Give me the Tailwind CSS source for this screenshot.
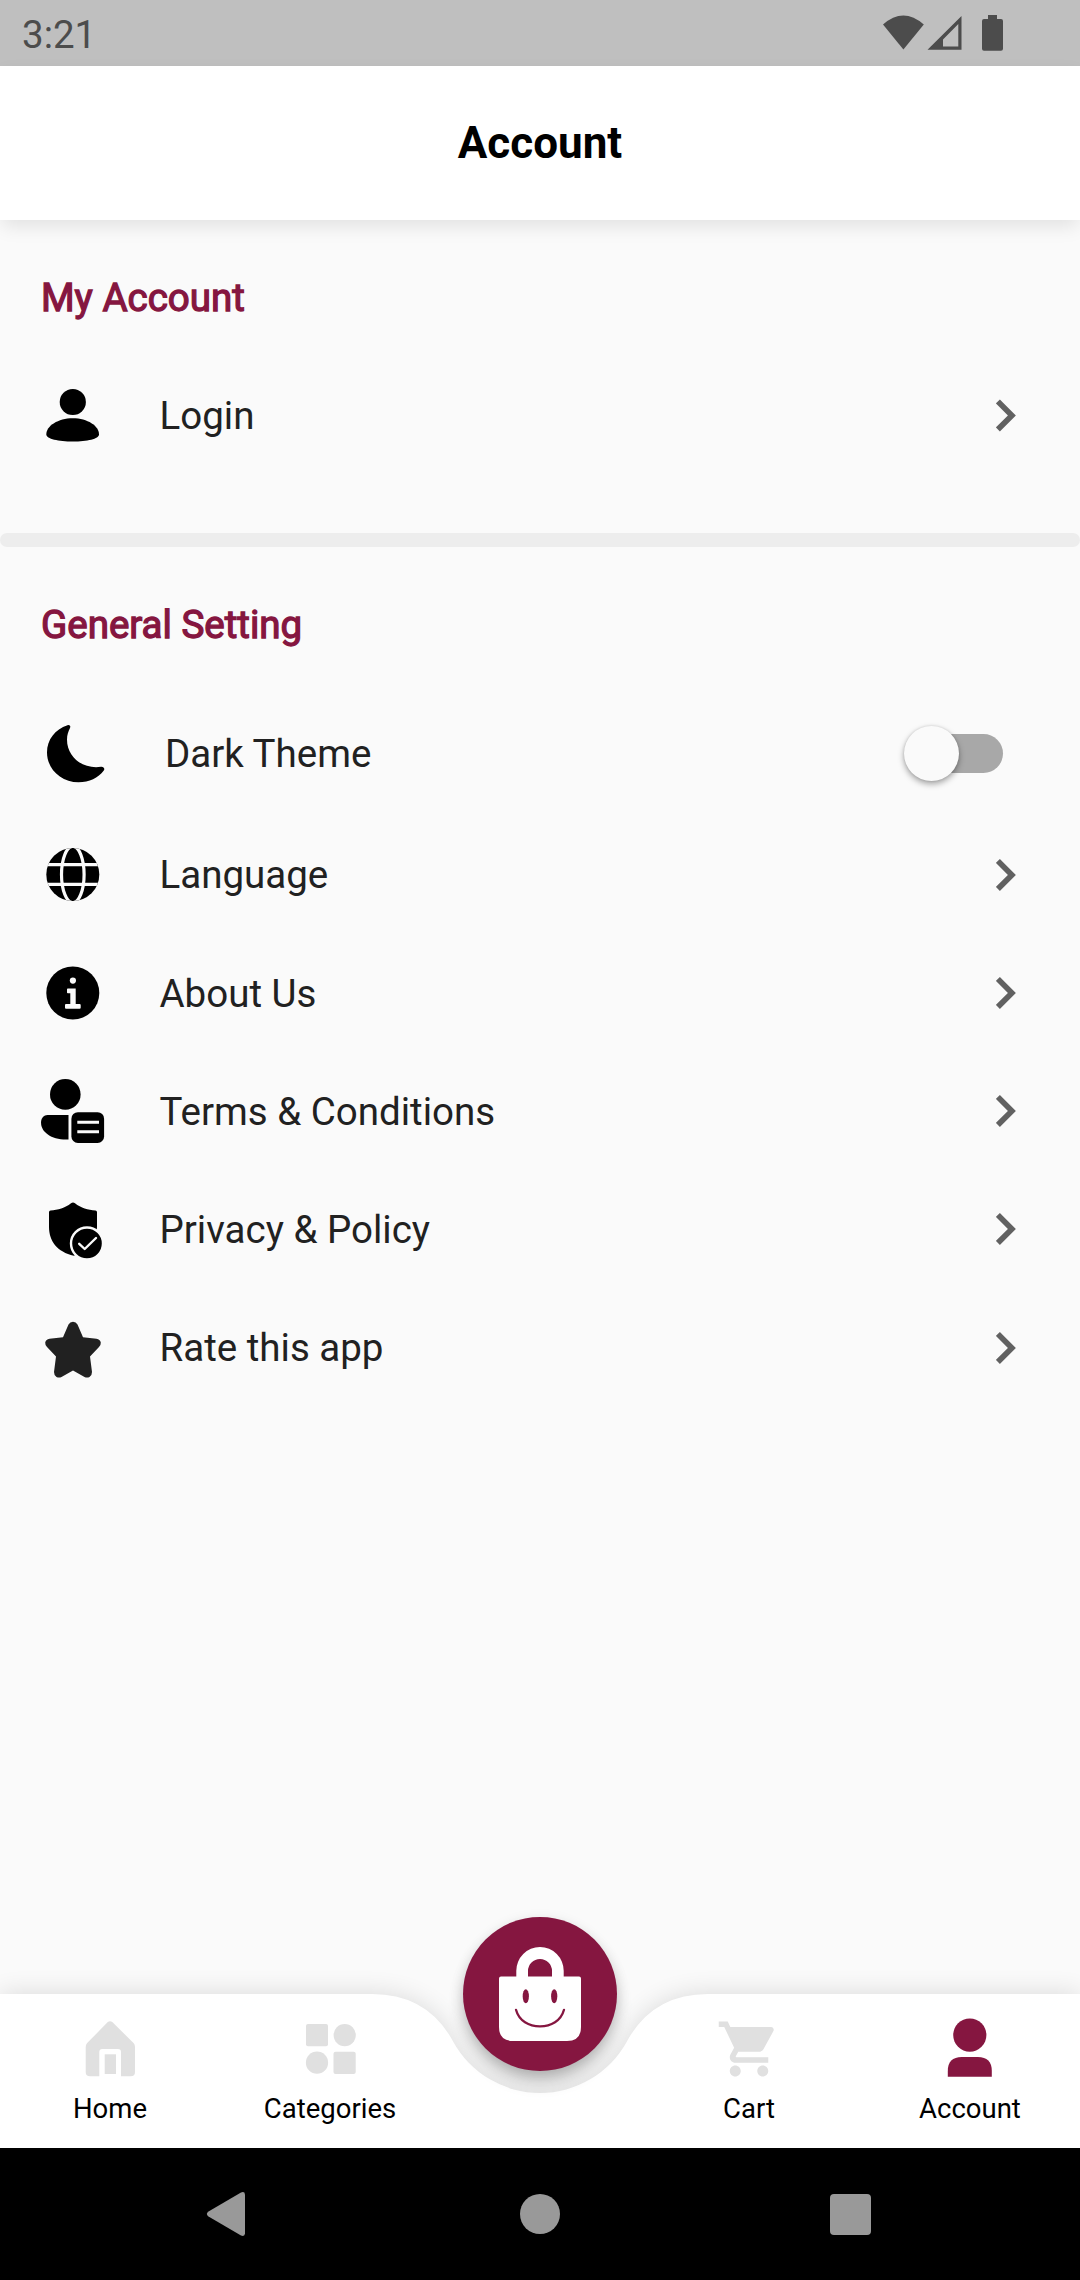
<!DOCTYPE html>
<html lang="en">
<head>
<meta charset="utf-8">
<title>Account</title>
<script src="https://cdn.jsdelivr.net/npm/@tailwindcss/browser@4"></script>
</head>
<body class="w-[1080px] h-[2280px] overflow-hidden flex flex-col bg-[#fafafa] font-['Roboto',sans-serif] text-[38.5px] leading-[46px] text-[#212121]">

<!-- Status bar -->
<div class="h-[66px] shrink-0 bg-[#bfbfbf] flex items-center justify-between pl-[22px] pr-[77px] text-[#4c4c4c]">
  <span class="text-[38.5px] pt-[3px]">3:21</span>
  <svg class="w-[120px] h-[36px]" viewBox="883 15 120 36" fill="currentColor">
    <path d="M883 24.5 Q903.3 6.5 923.8 24.5 L903.4 49.5Z"/>
    <path fill-rule="evenodd" d="M927.5 49.8 L961.5 16 V49.8Z M943 46.5 H958.3 V24 L943 39.5Z"/>
    <path d="M988 15 h9 v4 h4 q2 0 2 2 v27.7 q0 2-2 2 h-17 q-2 0-2-2 V21 q0-2 2-2 h4Z"/>
  </svg>
</div>

<!-- App bar -->
<header class="h-[154px] shrink-0 bg-white flex items-center justify-center relative shadow-[0_8px_18px_-2px_rgba(0,0,0,0.10)]">
  <h1 class="text-[44px] leading-[52px] font-bold text-black">Account</h1>
</header>

<main class="h-[1774px] shrink-0 flex flex-col">
  <h2 class="mt-[55px] pl-[41px] text-[#851640] [-webkit-text-stroke:1.3px_#851640]">My Account</h2>
  <div class="mt-[35px] h-[118px] pl-[41px] pr-[64px] flex items-center">
    <svg class="w-16 h-16 mr-[54.5px]" viewBox="0 0 64 64"><circle cx="31.8" cy="19" r="13.1"/><path d="M5.3 51.5C5.3 43 17 35.3 31.8 35.3S58 43 58 51.5C58 56 46 58.5 31.8 58.5S5.3 56 5.3 51.5Z"/></svg>
    <span class="flex-1 pt-[2px]">Login</span>
    <svg class="w-5 h-[33px]" viewBox="0 0 20 33" fill="none" stroke="#616161" stroke-width="5.6"><path d="M1.9 2.4 15.9 16.4 1.9 30.4"/></svg>
  </div>
  <div class="mt-[59px] h-[14px] shrink-0 rounded-full bg-[#ededed]"></div>
  <h2 class="mt-[55px] pl-[41px] text-[#851640] [-webkit-text-stroke:1.3px_#851640]">General Setting</h2>

  <div class="mt-[47px] h-[118px] pl-[41px] pr-[77px] flex items-center">
    <svg class="w-16 h-16 mr-[60px]" viewBox="0 0 64 64"><path d="M26.5 3.2C14 7.5 6 17.5 6 30.5 6 47 20 60.3 37.5 60.3 48.5 60.3 57 56 62.8 48.5 64.2 46.5 62.5 44.5 60 44.8 43 47.5 26 36 26 17.5 26 13 27.2 9.5 29 6 30 4 28.5 2.5 26.5 3.2Z"/></svg>
    <span class="flex-1">Dark Theme</span>
    <div class="mb-[2px] w-[91px] h-[39px] rounded-full bg-[#a8a8a8] flex items-center">
      <div class="w-[55px] h-[55px] shrink-0 -ml-2 rounded-full bg-[#fafafa] shadow-[0_3px_6px_rgba(0,0,0,0.35),0_0_3px_rgba(0,0,0,0.12)]"></div>
    </div>
  </div>

  <div class="pt-[2px] grid auto-rows-[118.25px]">
    <div class="pl-[41px] pr-[64px] flex items-center">
      <svg class="w-16 h-16 mr-[54.5px]" viewBox="0 0 64 64">
        <clipPath id="globe"><circle cx="31.8" cy="32.5" r="26.5"/></clipPath>
        <g clip-path="url(#globe)"><path d="M0 0H64V64H0Z"/><g fill="none" stroke="#fafafa" stroke-width="3.2"><ellipse cx="31.8" cy="32.5" rx="11.3" ry="28.2"/><path d="M0 22.7H64M0 42.3H64"/></g></g>
      </svg>
      <span class="flex-1 pt-[2px]">Language</span>
      <svg class="w-5 h-[33px]" viewBox="0 0 20 33" fill="none" stroke="#616161" stroke-width="5.6"><path d="M1.9 2.9 15.9 16.9 1.9 30.9"/></svg>
    </div>
    <div class="pl-[41px] pr-[64px] flex items-center">
      <svg class="w-16 h-16 mr-[54.5px]" viewBox="0 -1 64 64"><circle cx="31.8" cy="32" r="26.5"/><g fill="#fafafa"><circle cx="31.9" cy="19.6" r="3.1"/><path d="M26.8 27.6H34.7V43H38.6Q39.7 43 39.7 44V46.7Q39.7 47.7 38.6 47.7H25Q24 47.7 24 46.7V44Q24 43 25 43H29.3V32.3H26.8Q26 32.3 26 31.5V28.4Q26 27.6 26.8 27.6Z"/></g></svg>
      <span class="flex-1 pt-[3px]">About Us</span>
      <svg class="w-5 h-[33px]" viewBox="0 0 20 33" fill="none" stroke="#616161" stroke-width="5.6"><path d="M1.9 2.9 15.9 16.9 1.9 30.9"/></svg>
    </div>
    <div class="pl-[41px] pr-[64px] flex items-center">
      <svg class="w-16 h-16 mr-[54.5px]" viewBox="0 0 64 64"><circle cx="24.3" cy="15.4" r="15.3"/><path d="M6.5 36H27.5V60.5H25C10 60.5 0 53 0 43.5 0 39 3 36 6.5 36Z"/><rect x="30.4" y="33.2" width="32.7" height="30.8" rx="6.5"/><path d="M36.3 43.3H58M36.3 52.8H58" stroke="#fafafa" stroke-width="3"/></svg>
      <span class="flex-1 pt-[2px]">Terms &amp; Conditions</span>
      <svg class="w-5 h-[33px]" viewBox="0 0 20 33" fill="none" stroke="#616161" stroke-width="5.6"><path d="M1.9 2.9 15.9 16.9 1.9 30.9"/></svg>
    </div>
    <div class="pl-[41px] pr-[64px] flex items-center">
      <svg class="w-16 h-16 mr-[54.5px]" viewBox="0 0 64 64"><path d="M30 6.3Q32 4.5 34 6.3C40 11 47 13 54.5 13.5Q56 13.7 56 15.2V30C56 45 47 54 33 58.7 16 55 8 44 8 30V15.2Q8 13.7 9.5 13.5C17 13 24 11 30 6.3Z"/><circle cx="46" cy="46.5" r="16" stroke="#fafafa" stroke-width="2.4"/><path d="M38.2 46.8 43.7 52 55 41" fill="none" stroke="#fafafa" stroke-width="2.4" stroke-linecap="round" stroke-linejoin="round"/></svg>
      <span class="flex-1 pt-[2px]">Privacy &amp; Policy</span>
      <svg class="w-5 h-[33px]" viewBox="0 0 20 33" fill="none" stroke="#616161" stroke-width="5.6"><path d="M1.9 2.9 15.9 16.9 1.9 30.9"/></svg>
    </div>
    <div class="pl-[41px] pr-[64px] flex items-center">
      <svg class="w-16 h-16 mr-[54.5px]" viewBox="0 0 64 64" fill="#212121"><path d="M27.5 9.5Q29 6.8 32 6.8T36.5 9.5L42 22.2 55.5 23.7Q59 24.2 59.8 27.5 60 30 58 32L49 41.5 51 57Q51 60.5 48.5 62 46 63 43.5 62L32 55.5 20.5 62Q18 63 15.5 62 13 60.5 13 57L15 41.5 6 32Q4 30 4.2 27.5 5 24.2 8.5 23.7L22 22.2Z"/></svg>
      <span class="flex-1 pt-[2px]">Rate this app</span>
      <svg class="w-5 h-[33px]" viewBox="0 0 20 33" fill="none" stroke="#616161" stroke-width="5.6"><path d="M1.9 2.9 15.9 16.9 1.9 30.9"/></svg>
    </div>
  </div>
</main>

<!-- Bottom navigation -->
<nav class="relative h-[154px] shrink-0 text-[27.5px] leading-8 text-black">
  <!-- Notched bar surface -->
  <svg class="absolute left-0 top-0 w-[1080px] h-[154px] overflow-visible" viewBox="0 0 1080 154">
    <defs><filter id="lift" filterUnits="userSpaceOnUse" x="-60" y="-80" width="1200" height="300"><feGaussianBlur stdDeviation="13"/></filter></defs>
    <path filter="url(#lift)" opacity="0.13" d="M0 0H372.25Q427.25 0 453.1 47.4A99 99 0 0 0 626.9 47.4Q652.75 0 707.75 0H1080V154H0Z"/>
    <path fill="#fff" d="M0 0H372.25Q427.25 0 453.1 47.4A99 99 0 0 0 626.9 47.4Q652.75 0 707.75 0H1080V154H0Z"/>
  </svg>
  <div class="relative h-full grid grid-cols-[220px_220px_200px_220px_220px]">
    <div class="pt-[22px] flex flex-col items-center gap-[11px]">
      <svg class="w-[66px] h-[66px]" viewBox="0 0 66 66" fill="#e0e0e0"><path d="M30.8 6.1Q33 4.2 35.3 6.1L56.5 27Q58 28.5 58 31V56Q58 60.3 53.7 60.3H44V36Q44 33 41 33H25.3Q22.3 33 22.3 36V60.3H13Q8.7 60.3 8.7 56V31Q8.7 28.5 10.2 27Z"/><path d="M27.7 38.3H39V58H27.7Z"/></svg>
      <span>Home</span>
    </div>
    <div class="pt-[22px] flex flex-col items-center gap-[11px]">
      <svg class="w-[66px] h-[66px]" viewBox="0 0 66 66" fill="#e0e0e0"><rect x="9" y="8" width="22" height="22.3" rx="2"/><circle cx="47.7" cy="19.1" r="11.1"/><circle cx="20" cy="46.7" r="11.1"/><rect x="36.5" y="35.7" width="22.2" height="22.3" rx="2"/></svg>
      <span>Categories</span>
    </div>
    <div class="flex justify-center">
      <button class="-mt-[77px] w-[154px] h-[154px] rounded-full bg-[#851640] shadow-[0_12px_18px_-3px_rgba(0,0,0,0.24),0_4px_14px_rgba(0,0,0,0.12)]">
        <svg class="w-[154px] h-[154px]" viewBox="463 1917 154 154"><path fill="#fff" fill-rule="evenodd" d="M501 1976.4H516.3V1970.7A23.7 23.7 0 0 1 563.7 1970.7V1976.4H579Q581 1976.4 581 1978.4V2027Q581 2041 567 2041H513Q499 2041 499 2027V1978.4Q499 1976.4 501 1976.4ZM528 1976.4H552V1971A12 12 0 0 0 528 1971Z"/><g fill="#851640"><ellipse cx="525.8" cy="1996.2" rx="3.1" ry="7"/><ellipse cx="554.2" cy="1996.2" rx="3.1" ry="7"/></g><path d="M516 2009.8C519 2021 529 2026.4 540 2026.4S561 2021 564 2009.8" fill="none" stroke="#851640" stroke-width="2.3" stroke-linecap="round"/></svg>
      </button>
    </div>
    <div class="pt-[22px] pr-[2px] flex flex-col items-center gap-[11px]">
      <svg class="w-[66px] h-[66px]" viewBox="0 0 24 24" fill="#e0e0e0"><path d="M7 18c-1.1 0-1.99.9-1.99 2S5.9 22 7 22s2-.9 2-2-.9-2-2-2zM1 2v2h2l3.6 7.59-1.35 2.45c-.16.28-.25.61-.25.96 0 1.1.9 2 2 2h12v-2H7.42c-.14 0-.25-.11-.25-.25l.03-.12.9-1.63h7.45c.75 0 1.41-.41 1.75-1.03l3.58-6.49c.08-.14.12-.31.12-.48 0-.55-.45-1-1-1H5.21l-.94-2H1zm16 16c-1.1 0-1.99.9-1.99 2s.89 2 1.99 2 2-.9 2-2-.9-2-2-2z"/></svg>
      <span>Cart</span>
    </div>
    <div class="pt-[22px] flex flex-col items-center gap-[11px]">
      <svg class="w-[66px] h-[66px]" viewBox="0 0 66 66" fill="#851640"><circle cx="32.8" cy="19.1" r="16.6"/><path d="M10.8 60.7V55Q10.8 41 24.8 41H40.8Q54.8 41 54.8 55V60.7Z"/></svg>
      <span>Account</span>
    </div>
  </div>
</nav>

<!-- System navigation -->
<div class="relative h-[132px] shrink-0 bg-black flex items-center justify-between pl-[206px] pr-[209px]">
  <svg class="w-[39px] h-[46px]" viewBox="0 0 39 46" fill="#999"><path d="M35 1.4Q38.7 0 39 3.4V42.6Q38.7 46 35 44.6L2.5 25.6Q-.8 23 2.5 20.4Z"/></svg>
  <div class="w-10 h-10 rounded-full bg-[#999] ml-[5px]"></div>
  <div class="w-[41px] h-[41px] rounded-[4px] bg-[#999]"></div>
</div>
</body>
</html>
